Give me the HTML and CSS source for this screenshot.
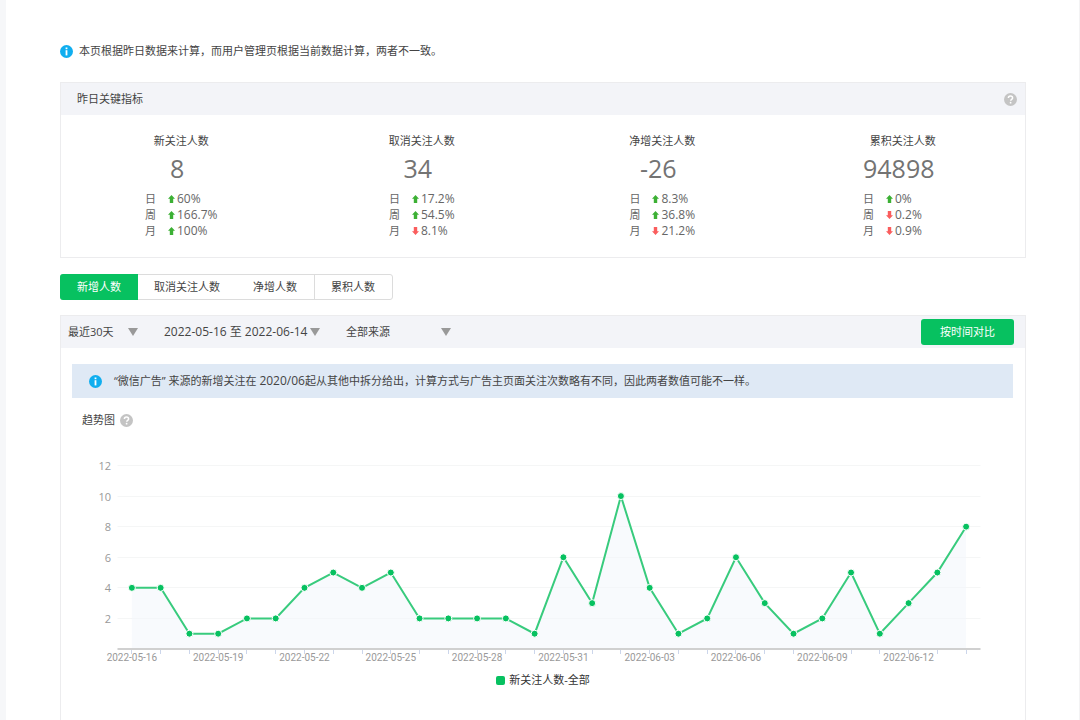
FILE: index.html
```html
<!DOCTYPE html>
<html lang="zh-CN">
<head>
    <meta charset="UTF-8">
    <meta name="viewport" content="width=device-width, initial-scale=1.0">
    <title>用户分析</title>
    <link rel="stylesheet" href="styles.css">
</head>
<body>
    <!-- Shared icons -->
    <svg class="sprite" aria-hidden="true">
        <symbol id="icon-info" viewBox="0 0 13 13">
            <circle cx="6.5" cy="6.5" r="6.5" fill="#10aeef"/>
            <rect x="5.6" y="2.5" width="1.8" height="1.7" fill="#fff"/>
            <rect x="5.6" y="5.2" width="1.8" height="5.2" fill="#fff"/>
        </symbol>
        <symbol id="icon-help" viewBox="0 0 13 13">
            <circle cx="6.5" cy="6.5" r="6.5" fill="#c4c4c4"/>
            <path d="M4.4 5.1c0-1.3.9-2.1 2.1-2.1s2.1.8 2.1 1.9c0 1.4-1.9 1.4-1.9 2.9" fill="none" stroke="#fff" stroke-width="1.5"/>
            <circle cx="6.6" cy="9.7" r=".9" fill="#fff"/>
        </symbol>
        <symbol id="icon-arrow" viewBox="0 0 7 8">
            <path d="M3.5 0L7 3.8H5.2V8H1.8V3.8H0z" fill="currentColor"/>
        </symbol>
    </svg>

    <main class="page">
        <p class="tip"><svg class="icon"><use href="#icon-info"/></svg>本页根据昨日数据来计算，而用户管理页根据当前数据计算，两者不一致。</p>

        <section class="panel">
            <div class="panel-header">
                <h2>昨日关键指标</h2>
                <button type="button" class="help" aria-label="指标说明"><svg class="icon"><use href="#icon-help"/></svg></button>
            </div>
            <div class="stats">
                <div class="stat">
                    <h3>新关注人数</h3>
                    <div class="stat-body">
                        <strong>8</strong>
                        <dl>
                            <dt>日</dt><dd><svg class="arrow up"><use href="#icon-arrow"/></svg>60%</dd>
                            <dt>周</dt><dd><svg class="arrow up"><use href="#icon-arrow"/></svg>166.7%</dd>
                            <dt>月</dt><dd><svg class="arrow up"><use href="#icon-arrow"/></svg>100%</dd>
                        </dl>
                    </div>
                </div>
                <div class="stat">
                    <h3>取消关注人数</h3>
                    <div class="stat-body">
                        <strong>34</strong>
                        <dl>
                            <dt>日</dt><dd><svg class="arrow up"><use href="#icon-arrow"/></svg>17.2%</dd>
                            <dt>周</dt><dd><svg class="arrow up"><use href="#icon-arrow"/></svg>54.5%</dd>
                            <dt>月</dt><dd><svg class="arrow down"><use href="#icon-arrow"/></svg>8.1%</dd>
                        </dl>
                    </div>
                </div>
                <div class="stat">
                    <h3>净增关注人数</h3>
                    <div class="stat-body">
                        <strong>-26</strong>
                        <dl>
                            <dt>日</dt><dd><svg class="arrow up"><use href="#icon-arrow"/></svg>8.3%</dd>
                            <dt>周</dt><dd><svg class="arrow up"><use href="#icon-arrow"/></svg>36.8%</dd>
                            <dt>月</dt><dd><svg class="arrow down"><use href="#icon-arrow"/></svg>21.2%</dd>
                        </dl>
                    </div>
                </div>
                <div class="stat">
                    <h3>累积关注人数</h3>
                    <div class="stat-body">
                        <strong>94898</strong>
                        <dl>
                            <dt>日</dt><dd><svg class="arrow up"><use href="#icon-arrow"/></svg>0%</dd>
                            <dt>周</dt><dd><svg class="arrow down"><use href="#icon-arrow"/></svg>0.2%</dd>
                            <dt>月</dt><dd><svg class="arrow down"><use href="#icon-arrow"/></svg>0.9%</dd>
                        </dl>
                    </div>
                </div>
            </div>
        </section>

        <nav class="tabs">
            <button type="button" class="active">新增人数</button>
            <button type="button">取消关注人数</button>
            <button type="button">净增人数</button>
            <button type="button" class="divided">累积人数</button>
        </nav>

        <section class="panel trend">
            <div class="panel-header toolbar">
                <span class="picker range">
                    <select aria-label="时间范围"><option>最近30天</option></select>
                </span>
                <span class="picker dates">
                    <button type="button">2022-05-16 至 2022-06-14</button>
                </span>
                <span class="picker source">
                    <select aria-label="来源"><option>全部来源</option></select>
                </span>
                <button type="button" class="compare">按时间对比</button>
            </div>

            <p class="note"><svg class="icon"><use href="#icon-info"/></svg><span>“微信广告” 来源的新增关注在 <span class="num">2020/06</span>起从其他中拆分给出，计算方式与广告主页面关注次数略有不同，因此两者数值可能不一样。</span></p>

            <div class="trend-title">
                <h2>趋势图</h2>
                <button type="button" class="help" aria-label="趋势图说明"><svg class="icon"><use href="#icon-help"/></svg></button>
            </div>

            <svg class="chart" id="chart" viewBox="0 0 964 240" role="img" aria-label="新关注人数趋势"></svg>
            <div class="legend"><span class="swatch"></span>新关注人数-全部</div>
        </section>
    </main>

    <script>
        const values = [4, 4, 1, 1, 2, 2, 4, 5, 4, 5, 2, 2, 2, 2, 1, 6, 3, 10, 4, 1, 2, 6, 3, 1, 2, 5, 1, 3, 5, 8];
        const firstDay = Date.UTC(2022, 4, 16);
        const left = 56.5, right = 919.5, base = 221, top12 = 37.5;
        const step = (right - left) / values.length;

        const x = i => left + step * (i + 0.5);
        const y = v => base - v * (base - top12) / 12;

        let out = "";

        // Grid lines and value labels
        for (let v = 2; v <= 12; v += 2) {
            const gy = Math.floor(y(v)) + 0.5;
            out += `<line class="grid" x1="${left}" x2="${right}" y1="${gy}" y2="${gy}"/>`;
            out += `<text class="value" x="50" y="${gy + 4}">${v}</text>`;
        }

        // Area and line
        const points = values.map((v, i) => `${x(i)},${y(v)}`).join(" ");
        out += `<polygon class="area" points="${x(0)},${base} ${points} ${x(values.length - 1)},${base}"/>`;
        out += `<polyline class="line" points="${points}"/>`;

        // Axis, ticks, dates
        values.forEach((v, i) => {
            const tx = Math.floor(x(i)) + 0.5;
            out += `<line class="tick" x1="${tx}" x2="${tx}" y1="${base}" y2="${base + 5}"/>`;
            if (i % 3 === 0 && i < 28) {
                const day = new Date(firstDay + i * 86400000).toISOString().slice(0, 10);
                out += `<text class="date" x="${x(i)}" y="233">${day}</text>`;
            }
        });
        out += `<line class="axis" x1="${left}" x2="${right}" y1="${base}" y2="${base}"/>`;

        values.forEach((v, i) => {
            out += `<circle class="dot" cx="${x(i)}" cy="${y(v)}" r="3.5"/>`;
        });

        document.getElementById("chart").innerHTML = out;
    </script>
</body>
</html>
```
FILE: styles.css
```css
* {
    box-sizing: border-box;
}

body {
    margin: 0;
    background-color: #fff;
    border-left: 6px solid #f6f7f9;
    border-right: 1px solid #f3f3f4;
    font-family: "Open Sans", "Noto Sans CJK SC", sans-serif;
    font-size: 11px;
    line-height: 16px;
    color: #444;
}

h2, h3, p, dl, dd {
    margin: 0;
    font-size: 11px;
    font-weight: normal;
}

button, select {
    font: inherit;
    color: inherit;
    background: none;
    border: none;
    margin: 0;
    padding: 0;
    cursor: pointer;
}

.sprite {
    display: none;
}

.icon {
    display: block;
    width: 13px;
    height: 13px;
    flex: none;
}

.num {
    font-size: 12px;
}

.page {
    display: flex;
    flex-direction: column;
    min-height: 100vh;
    padding: 43px 53px 0 54px;
}

.tip {
    display: flex;
    align-items: center;
    gap: 6px;
    margin-bottom: 23px;
}

/* Panels */
.panel {
    border: 1px solid #ececee;
}

.panel-header {
    display: flex;
    align-items: center;
    justify-content: space-between;
    height: 32px;
    padding: 0 8px 0 16px;
    background-color: #f3f4f8;
}

.stats {
    display: grid;
    grid-template-columns: repeat(4, 1fr);
    padding: 18px 2px 18px 0;
}

.stat {
    display: flex;
    flex-direction: column;
    align-items: center;
}

.stat-body {
    color: #666;
}

.stat-body strong {
    display: block;
    margin: 2px 0 6px;
    padding-right: 8px;
    font-size: 25px;
    font-weight: normal;
    line-height: 34px;
    text-align: center;
    color: #737373;
}

.stat-body dl {
    display: grid;
    grid-template-columns: auto 1fr;
    column-gap: 12px;
}

.stat-body dd {
    display: flex;
    align-items: center;
    gap: 2px;
    font-size: 12px;
}

.arrow {
    width: 7px;
    height: 8px;
}

.up {
    color: #3cb034;
}

.down {
    color: #fa5d5d;
    transform: rotate(180deg);
}

/* Tabs */
.tabs {
    display: flex;
    align-self: flex-start;
    margin: 16px 0 15px;
    border: 1px solid #dcdcdc;
    border-radius: 3px;
}

.tabs button {
    height: 24px;
    padding: 0 17px 0 16px;
}

.tabs .active {
    margin: -1px 0 -1px -1px;
    height: 26px;
    padding: 0 17px;
    border-radius: 3px 0 0 3px;
    background-color: #07c160;
    color: #fff;
}

.tabs .divided {
    border-left: 1px solid #dcdcdc;
}

/* Trend */
.trend {
    flex: 1;
    border-bottom: none;
}

.toolbar {
    justify-content: flex-start;
    gap: 26px;
    padding: 0 11px 0 7px;
}

.picker {
    display: grid;
    align-items: center;
}

.picker select, .picker button {
    grid-area: 1 / 1;
    width: 100%;
    appearance: none;
    text-align: left;
}

.picker::after {
    content: "";
    grid-area: 1 / 1;
    justify-self: end;
    border: 5px solid transparent;
    border-top: 8px solid #999;
    border-bottom: none;
    pointer-events: none;
}

.range {
    width: 70px;
}

.dates {
    width: 156px;
    font-size: 12px;
}

.source {
    width: 105px;
}

.compare {
    height: 26px;
    margin-left: auto;
    padding: 0 19px;
    border-radius: 3px;
    background-color: #07c160;
    color: #fff;
}

.note {
    display: flex;
    align-items: center;
    gap: 12px;
    min-height: 34px;
    margin: 16px 12px 0 11px;
    padding: 0 17px;
    background-color: #dfe9f5;
}

.trend-title {
    display: flex;
    align-items: center;
    gap: 5px;
    margin: 14px 21px 0;
}

.chart {
    display: block;
    width: 100%;
}

.chart text {
    font-family: Roboto, sans-serif;
    font-size: 10px;
    fill: #999;
}

.chart .value {
    font-family: "Open Sans", sans-serif;
    font-size: 11px;
    text-anchor: end;
}

.chart .date {
    text-anchor: middle;
}

.grid {
    stroke: #f5f6f6;
}

.area {
    fill: #f3f7fb;
    fill-opacity: 0.6;
}

.line {
    fill: none;
    stroke: #38cb7d;
    stroke-width: 2;
}

.tick {
    stroke: #ccd6eb;
}

.axis {
    stroke: #d0d0d0;
    stroke-width: 2;
}

.dot {
    fill: #07c160;
    stroke: #fff;
}

.legend {
    display: flex;
    align-items: center;
    justify-content: center;
    gap: 4px;
    margin-top: 4px;
    color: #333;
}

.swatch {
    width: 9px;
    height: 9px;
    border-radius: 2px;
    background-color: #07c160;
}
```
